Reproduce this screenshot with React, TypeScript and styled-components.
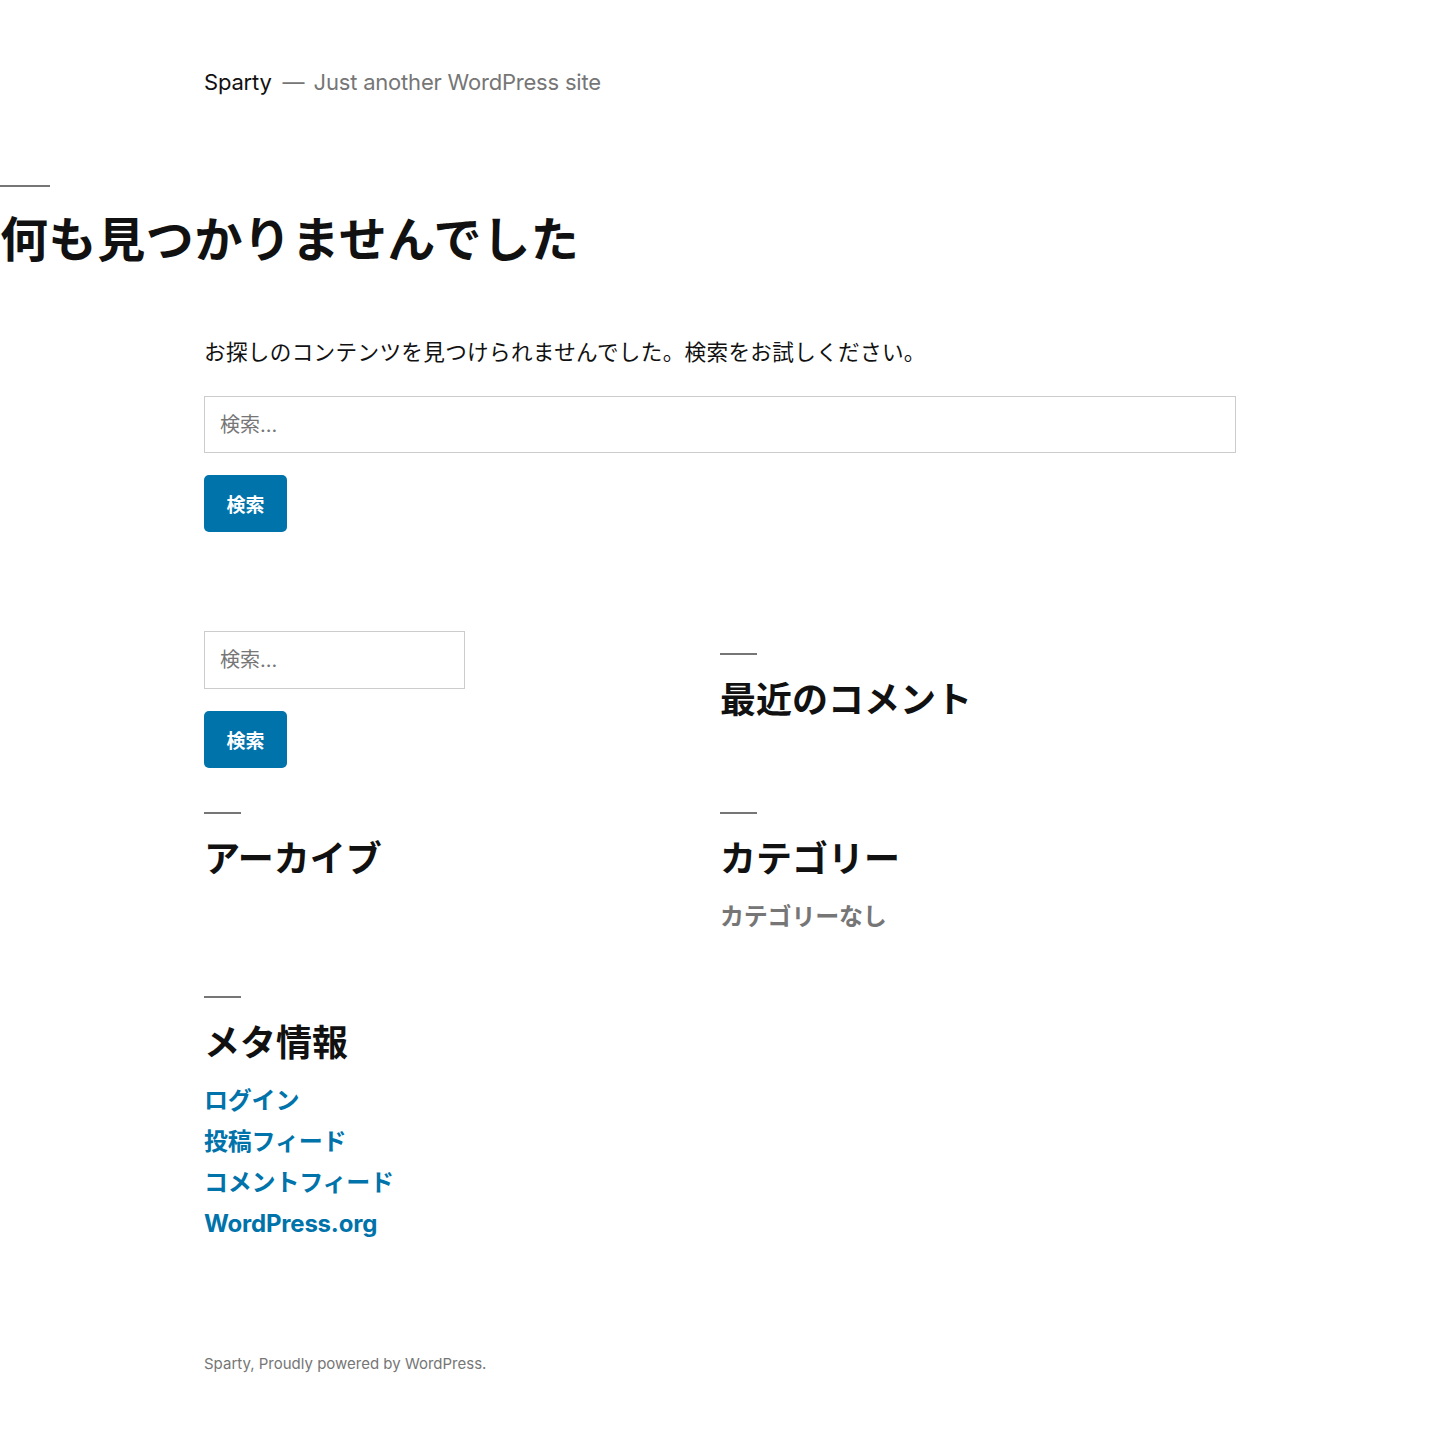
import React from 'react';
import styled, { createGlobalStyle } from 'styled-components';

const GlobalStyle = createGlobalStyle`
  html, body {
    margin: 0;
    padding: 0;
    background: #fff;
  }
  body {
    font-family: "Inter", "Noto Sans CJK JP", sans-serif;
    color: #111;
    -webkit-font-smoothing: antialiased;
  }
  * {
    box-sizing: border-box;
  }
`;

const Page = styled.div`
  min-height: 1444px;
  display: flex;
  flex-direction: column;
`;

const SiteHeader = styled.header`
  padding: 68px 204px 0;
  display: flex;
  align-items: baseline;
  font-size: 22px;
  line-height: 28px;
`;

const SiteTitle = styled.span`
  color: #111;
  letter-spacing: -0.2px;
`;

const Sep = styled.span`
  color: #767676;
  margin: 0 9px 0 11px;
`;

const SiteDesc = styled.span`
  color: #767676;
  letter-spacing: -0.2px;
`;

const PageHeader = styled.div`
  margin-top: 89px;
`;

const Rule = styled.div<{ $w: number }>`
  width: ${(p) => p.$w}px;
  height: 2px;
  background: #767676;
`;

const PageTitle = styled.h1`
  margin: 24px 0 0;
  font-size: 48px;
  line-height: 58px;
  font-weight: 700;
  letter-spacing: 0.6px;
`;

const Content = styled.main`
  padding: 0 204px;
`;

const Notice = styled.p`
  margin: 67px 0 0;
  font-size: 21.6px;
  line-height: 33px;
  letter-spacing: 0.33px;
  color: #111;
  font-weight: 400;
`;

const SearchForm = styled.form<{ $w?: number }>`
  margin: ${(p) => (p.$w ? '0' : '27px 0 0')};
  display: flex;
  flex-direction: column;
  align-items: flex-start;
  gap: 22px;
`;

const SearchInput = styled.input<{ $w?: number }>`
  width: ${(p) => (p.$w ? `${p.$w}px` : '100%')};
  height: ${(p) => (p.$w ? 58 : 57)}px;
  border: 1px solid #ccc;
  padding: 0 15px;
  font-family: "Inter", "Noto Sans CJK JP", sans-serif;
  font-size: 20px;
  color: #111;
  outline: none;
  &::placeholder {
    color: #767676;
  }
`;

const SearchButton = styled.button`
  width: 83px;
  height: 57px;
  border: none;
  border-radius: 5px;
  background: #0073aa;
  color: #fff;
  font-family: "Inter", "Noto Sans CJK JP", sans-serif;
  font-size: 19px;
  font-weight: 700;
  cursor: pointer;
`;

const Widgets = styled.section`
  margin-top: 99px;
  padding: 0 204px;
  display: grid;
  grid-template-columns: 1fr 1fr;
  align-items: start;
  row-gap: 22px;
`;

const Widget = styled.div``;

const WidgetTitle = styled.h2`
  margin: 0;
  padding-top: 22px;
  font-size: 36px;
  line-height: 43px;
  font-weight: 700;
  &::before {
    content: '';
    display: block;
    width: 37px;
    height: 2px;
    background: #767676;
    margin-bottom: 24px;
  }
`;

const WidgetList = styled.ul`
  list-style: none;
  margin: 15px 0 15px;
  padding: 0;
`;

const Item = styled.li<{ $muted?: boolean }>`
  font-size: 24px;
  line-height: 41px;
  font-weight: 700;
  letter-spacing: -0.2px;
  color: ${(p) => (p.$muted ? '#767676' : '#0073aa')};
`;

const Link = styled.a`
  color: #0073aa;
  text-decoration: none;
`;

const Footer = styled.footer`
  margin-top: 95px;
  padding: 0 204px;
  font-size: 15px;
  line-height: 20px;
  color: #767676;
`;

export default function App() {
  const metaLinks = ['ログイン', '投稿フィード', 'コメントフィード', 'WordPress.org'];

  return (
    <Page>
      <GlobalStyle />
      <SiteHeader>
        <SiteTitle>Sparty</SiteTitle>
        <Sep>—</Sep>
        <SiteDesc>Just another WordPress site</SiteDesc>
      </SiteHeader>

      <PageHeader>
        <Rule $w={50} />
        <PageTitle>何も見つかりませんでした</PageTitle>
      </PageHeader>

      <Content>
        <Notice>お探しのコンテンツを見つけられませんでした。検索をお試しください。</Notice>
        <SearchForm onSubmit={(e) => e.preventDefault()}>
          <SearchInput placeholder="検索..." />
          <SearchButton type="submit">検索</SearchButton>
        </SearchForm>
      </Content>

      <Widgets>
        <Widget>
          <SearchForm $w={261} onSubmit={(e) => e.preventDefault()}>
            <SearchInput $w={261} placeholder="検索..." />
            <SearchButton type="submit">検索</SearchButton>
          </SearchForm>
        </Widget>
        <Widget>
          <WidgetTitle>最近のコメント</WidgetTitle>
        </Widget>

        <Widget>
          <WidgetTitle>アーカイブ</WidgetTitle>
        </Widget>
        <Widget>
          <WidgetTitle>カテゴリー</WidgetTitle>
          <WidgetList>
            <Item $muted>カテゴリーなし</Item>
          </WidgetList>
        </Widget>

        <Widget>
          <WidgetTitle>メタ情報</WidgetTitle>
          <WidgetList>
            {metaLinks.map((l) => (
              <Item key={l}>
                <Link href="#">{l}</Link>
              </Item>
            ))}
          </WidgetList>
        </Widget>
      </Widgets>

      <Footer>Sparty, Proudly powered by WordPress.</Footer>
    </Page>
  );
}
